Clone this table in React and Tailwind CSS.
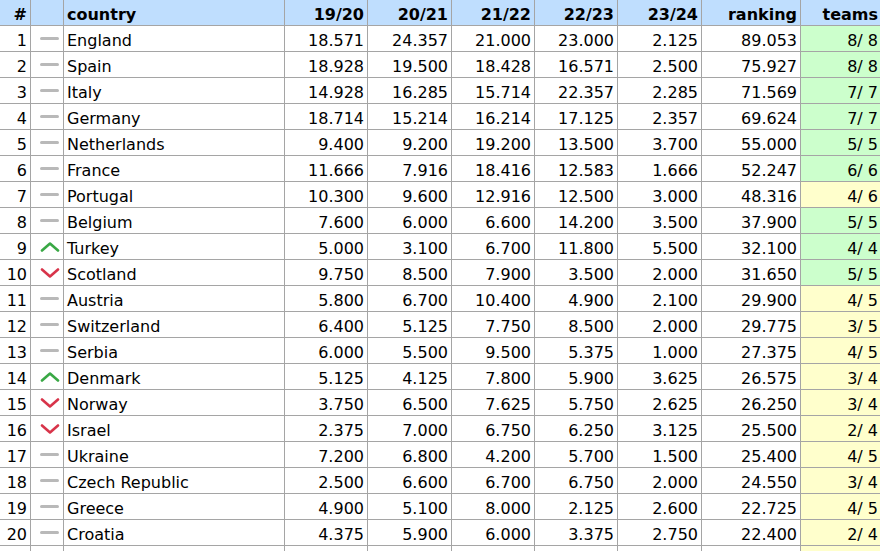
import React from 'react';

const rows = [
  [1, 'same', 'England', '18.571', '24.357', '21.000', '23.000', '2.125', '89.053', '8/ 8'],
  [2, 'same', 'Spain', '18.928', '19.500', '18.428', '16.571', '2.500', '75.927', '8/ 8'],
  [3, 'same', 'Italy', '14.928', '16.285', '15.714', '22.357', '2.285', '71.569', '7/ 7'],
  [4, 'same', 'Germany', '18.714', '15.214', '16.214', '17.125', '2.357', '69.624', '7/ 7'],
  [5, 'same', 'Netherlands', '9.400', '9.200', '19.200', '13.500', '3.700', '55.000', '5/ 5'],
  [6, 'same', 'France', '11.666', '7.916', '18.416', '12.583', '1.666', '52.247', '6/ 6'],
  [7, 'same', 'Portugal', '10.300', '9.600', '12.916', '12.500', '3.000', '48.316', '4/ 6'],
  [8, 'same', 'Belgium', '7.600', '6.000', '6.600', '14.200', '3.500', '37.900', '5/ 5'],
  [9, 'up', 'Turkey', '5.000', '3.100', '6.700', '11.800', '5.500', '32.100', '4/ 4'],
  [10, 'down', 'Scotland', '9.750', '8.500', '7.900', '3.500', '2.000', '31.650', '5/ 5'],
  [11, 'same', 'Austria', '5.800', '6.700', '10.400', '4.900', '2.100', '29.900', '4/ 5'],
  [12, 'same', 'Switzerland', '6.400', '5.125', '7.750', '8.500', '2.000', '29.775', '3/ 5'],
  [13, 'same', 'Serbia', '6.000', '5.500', '9.500', '5.375', '1.000', '27.375', '4/ 5'],
  [14, 'up', 'Denmark', '5.125', '4.125', '7.800', '5.900', '3.625', '26.575', '3/ 4'],
  [15, 'down', 'Norway', '3.750', '6.500', '7.625', '5.750', '2.625', '26.250', '3/ 4'],
  [16, 'down', 'Israel', '2.375', '7.000', '6.750', '6.250', '3.125', '25.500', '2/ 4'],
  [17, 'same', 'Ukraine', '7.200', '6.800', '4.200', '5.700', '1.500', '25.400', '4/ 5'],
  [18, 'same', 'Czech Republic', '2.500', '6.600', '6.700', '6.750', '2.000', '24.550', '3/ 4'],
  [19, 'same', 'Greece', '4.900', '5.100', '8.000', '2.125', '2.600', '22.725', '4/ 5'],
  [20, 'same', 'Croatia', '4.375', '5.900', '6.000', '3.375', '2.750', '22.400', '2/ 4'],
];

const gridCols = 'grid grid-cols-[31px_33px_221px_83px_84px_83px_83px_84px_99px_81px]';
const cell = 'h-[26px] border-r border-b border-[#a5a5a5] flex items-center';
const text = `${cell} pt-[4px]`;
const num = `${text} justify-end pr-[3px]`;

const Trend = ({ dir }) => {
  if (dir === 'up') {
    return (
      <svg width="20" height="10" viewBox="0 0 20 10">
        <polyline points="2,8.5 10,1.5 18,8.5" fill="none" stroke="#39a845" strokeWidth="2.6" strokeLinecap="round" strokeLinejoin="round" />
      </svg>
    );
  }
  if (dir === 'down') {
    return (
      <svg width="20" height="10" viewBox="0 0 20 10">
        <polyline points="2,1.5 10,8.5 18,1.5" fill="none" stroke="#d8344a" strokeWidth="2.6" strokeLinecap="round" strokeLinejoin="round" />
      </svg>
    );
  }
  return <div className="w-[19px] h-[3px] rounded-full bg-[#b9b9b9]" />;
};

const Row = ({ r }) => {
  const [pos, dir, country, ...rest] = r;
  const teams = rest[6];
  const [a, b] = teams.split('/').map((s) => s.trim());
  const full = a === b;
  return (
    <div className={gridCols}>
      <div className={num}>{pos}</div>
      <div className={`${cell} pl-[9px]`}><Trend dir={dir} /></div>
      <div className={`${text} pl-[3px]`}>{country}</div>
      {rest.slice(0, 6).map((v, i) => (
        <div key={i} className={num}>{v}</div>
      ))}
      <div className={`${num} whitespace-pre ${full ? 'bg-[#ccffcc]' : 'bg-[#ffffcc]'}`}>{teams}</div>
    </div>
  );
};

export default function App() {
  return (
    <div className="w-[880px] h-[551px] overflow-hidden bg-white text-black text-[16px] font-['DejaVu_Sans',sans-serif]">
      <div className="w-[882px]">
        <div className={`${gridCols} bg-[#bfdefe] font-bold`}>
          <div className={num}>#</div>
          <div className={cell}></div>
          <div className={`${text} pl-[3px]`}>country</div>
          {['19/20', '20/21', '21/22', '22/23', '23/24', 'ranking', 'teams'].map((h) => (
            <div key={h} className={num}>{h}</div>
          ))}
        </div>
        {rows.map((r) => (
          <Row key={r[0]} r={r} />
        ))}
        <div className={gridCols}>
          {Array.from({ length: 9 }).map((_, i) => (
            <div key={i} className={cell}></div>
          ))}
          <div className={`${cell} bg-[#ffffcc]`}></div>
        </div>
      </div>
    </div>
  );
}
